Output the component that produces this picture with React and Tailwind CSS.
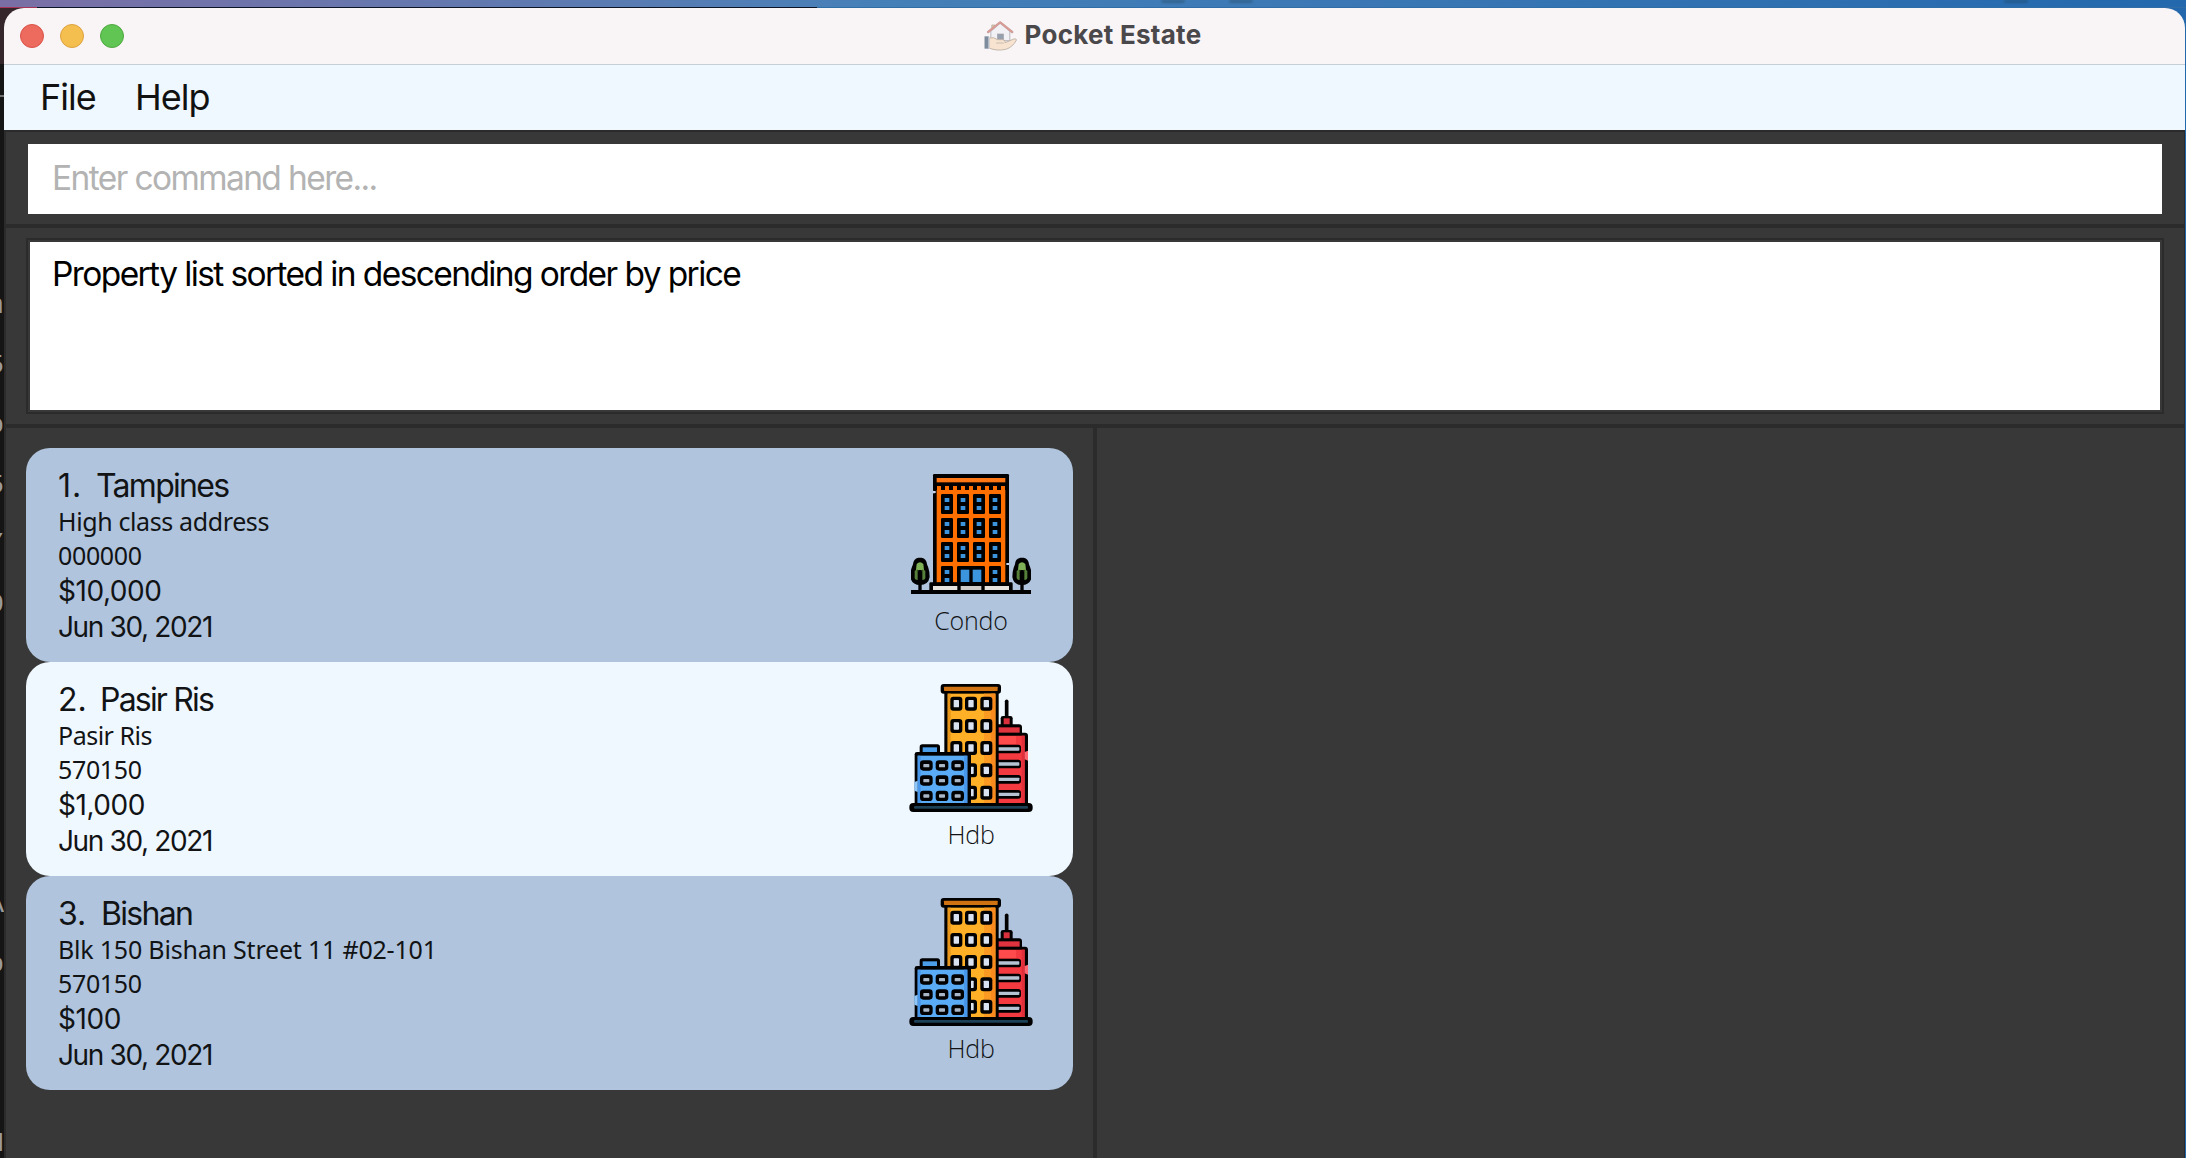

import React from "react";

const properties = [
  {
    num: "1.",
    numClass: "w-[38px] tracking-[1px]",
    name: "Tampines",
    nameClass: "tracking-[-1.72px]",
    address: "High class address",
    addressClass: "tracking-[-0.38px]",
    postal: "000000",
    price: "$10,000",
    date: "Jun 30, 2021",
    kind: "Condo",
    bg: "bg-[#b0c4de]",
  },
  {
    num: "2.",
    numClass: "w-[42px]",
    name: "Pasir Ris",
    nameClass: "tracking-[-1.8px]",
    address: "Pasir Ris",
    addressClass: "tracking-[-0.5px]",
    postal: "570150",
    price: "$1,000",
    date: "Jun 30, 2021",
    kind: "Hdb",
    bg: "bg-[#f0f8ff]",
  },
  {
    num: "3.",
    numClass: "w-[43px]",
    name: "Bishan",
    nameClass: "tracking-[-1.7px]",
    address: "Blk 150 Bishan Street 11 #02-101",
    addressClass: "tracking-[-0.2px]",
    postal: "570150",
    price: "$100",
    date: "Jun 30, 2021",
    kind: "Hdb",
    bg: "bg-[#b0c4de]",
  },
];

const editorTail = ["n", "5", "o", "5", "/", "0", "", "", "", "", "A", "o", "", "", "H"];

function Tree({ x }) {
  return (
    <g transform={`translate(${x} 0)`}>
      <path d="M-5 323h10q15 3 16 20l4 10q4 12 4 28q-4 24-29 24t-29-24q0-16 4-28l4-10q1-17 16-20z" fill="#000" />
      <path d="M-10 342q10-10 20 0l2 18h-24z" fill="#7fb257" />
      <path d="M-16 362l9-4v32q-11 0-9-12zM16 362l-9-4v32q11 0 9-12z" fill="#56803a" />
      <path d="M0 350v14" stroke="#7fb257" strokeWidth="10" />
      <path d="M0 360v62" stroke="#000" strokeWidth="10" />
    </g>
  );
}

function CondoIcon() {
  const cols = [153, 201, 249, 297];
  return (
    <svg viewBox="63 72 360 360" className="size-[120px]">
      <rect x="129" y="72" width="228" height="52" rx="4" fill="#000" />
      <rect x="129" y="130" width="228" height="272" fill="#000" />
      <rect x="134" y="120" width="223" height="20" fill="#000" />
      <rect x="140" y="84" width="206" height="13" fill="#ff7714" />
      <rect x="140" y="120" width="206" height="278" fill="#ff6f00" />
      {[141, 165, 189, 213, 237, 261, 285, 309, 333].map((x) => (
        <rect key={x} x={x} y="108" width="12" height="14" fill="#ff6f00" />
      ))}
      {[132, 204, 276].map((y) =>
        cols.map((x) => (
          <g key={`${x}-${y}`}>
            <rect x={x} y={y} width="36" height="60" rx="4" fill="#000" />
            <rect x={x + 11} y={y + 12} width="14" height="12" fill="#3c94dc" />
            <rect x={x + 11} y={y + 36} width="14" height="12" fill="#3c94dc" />
          </g>
        ))
      )}
      {[153, 297].map((x) => (
        <g key={x}>
          <rect x={x} y="348" width="36" height="52" rx="4" fill="#000" />
          <rect x={x + 11} y="360" width="14" height="12" fill="#3c94dc" />
          <rect x={x + 11} y="384" width="14" height="12" fill="#3c94dc" />
        </g>
      ))}
      <rect x="201" y="348" width="84" height="52" rx="4" fill="#000" />
      <rect x="212" y="359" width="26" height="37" fill="#3c94dc" />
      <rect x="248" y="359" width="26" height="37" fill="#3c94dc" />
      <rect x="118" y="397" width="250" height="30" rx="4" fill="#000" />
      <rect x="129" y="408" width="73" height="12" fill="#e6e2de" />
      <rect x="212" y="408" width="62" height="12" fill="#cfcbc9" />
      <rect x="284" y="408" width="73" height="12" fill="#e6e2de" />
      <rect x="63" y="420" width="361" height="12" fill="#000" />
      <path d="M129 126h8M349 342h8" stroke="#c9d8ee" strokeWidth="6" />
      <Tree x={90} />
      <Tree x={396} />
    </svg>
  );
}

function HdbIcon() {
  return (
    <svg viewBox="51 72 384 384" className="size-[128px]">
      <path d="M350 124v52" stroke="#000" strokeWidth="11" strokeLinecap="round" />
      <rect x="332" y="168" width="36" height="32" rx="7" fill="#000" />
      <rect x="341" y="175" width="18" height="20" fill="#d9303b" />
      <path d="M318 193h69q9 0 9 9v16h9q9 0 9 9v210h-96z" fill="#000" />
      <path d="M324 202h65v16h-65z" fill="#df3340" />
      <path d="M324 227h80v203h-80z" fill="#f33a40" />
      <path d="M324 228h54v24h-54z" fill="#ff4b4c" />
      <path d="M395 227h9v203h-9z" fill="#e02f3b" />
      <path d="M404 276l10-4v30l-10-4z" fill="#ff6670" />
      {[267, 312, 358, 403].map((y) => (
        <g key={y}>
          <rect x="312" y={y - 13} width="81" height="26" rx="8" fill="#000" />
          <rect x="322" y={y - 5} width="66" height="10" rx="2" fill="#b6c3d3" />
        </g>
      ))}
      <rect x="163" y="90" width="163" height="345" fill="#000" />
      <rect x="152" y="72" width="181" height="29" rx="9" fill="#000" />
      <rect x="162" y="80" width="161" height="13" rx="2" fill="#cf7212" />
      <rect x="173" y="101" width="143" height="329" fill="#ffb026" />
      <rect x="173" y="101" width="9" height="329" fill="#e8961c" />
      <rect x="282" y="101" width="34" height="329" fill="#fb9a22" />
      <rect x="303" y="101" width="13" height="329" fill="#f98a1e" />
      {[131, 198, 264, 331, 398].map((y) =>
        [199, 243, 289].map((x) => (
          <g key={`${x}-${y}`}>
            <rect x={x - 18} y={y - 21} width="36" height="42" rx="9" fill="#000" />
            <rect x={x - 8} y={y - 11} width="16" height="22" rx="2" fill="#d9e2f0" />
          </g>
        ))
      )}
      <rect x="89" y="253" width="61" height="34" rx="8" fill="#000" />
      <rect x="98" y="262" width="43" height="16" fill="#4a9de9" />
      <rect x="74" y="276" width="169" height="158" rx="7" fill="#000" />
      <rect x="83" y="287" width="149" height="143" fill="#5aabf6" />
      <path d="M83 287h9v143h-9zM222 287h10v143h-10z" fill="#4796ea" />
      <path d="M73 366l10-4v34l-10-4z" fill="#8cc6fb" />
      {[317, 362, 408].map((y) =>
        [109, 156, 203].map((x) => (
          <g key={`${x}-${y}`}>
            <rect x={x - 19} y={y - 16} width="38" height="31" rx="10" fill="#000" />
            <rect x={x - 9} y={y - 5} width="18" height="10" rx="2" fill="#a9b6c6" />
          </g>
        ))
      )}
      <rect x="58" y="429" width="370" height="27" rx="12" fill="#000" />
      <rect x="72" y="438" width="342" height="8" rx="3" fill="#1d4257" />
    </svg>
  );
}

function AppIcon() {
  return (
    <svg viewBox="71 57 98 90" className="h-[30px] w-[33px] shrink-0 opacity-80" fill="none">
      <path d="M94 82V69h9v7" fill="#e8c58c" stroke="#a59a90" strokeWidth="2.5" />
      <path d="M91 88l28-25 29 25v28H91z" fill="#f0f0f4" stroke="#a9a7b0" strokeWidth="3" />
      <path d="M83 90l36-29 36 29" stroke="#b98884" strokeWidth="7" strokeLinejoin="round" strokeLinecap="round" />
      <path d="M84 89l35-28 35 28" stroke="#d9857f" strokeWidth="4" strokeLinejoin="round" strokeLinecap="round" />
      <rect x="111" y="96" width="18" height="23" fill="#7e8a9b" stroke="#8e8d95" strokeWidth="2" />
      <path d="M86 108q14-4 25 5h16q9 1 7 9l26-11q7-2 8 3-12 22-32 28-28 6-50-4z" fill="#f7dfc6" stroke="#b5a697" strokeWidth="3" strokeLinejoin="round" />
      <path d="M107 123h23" stroke="#b5a697" strokeWidth="2.5" />
      <path d="M72 103h13v37H72z" fill="#607389" />
      <path d="M84 104h3v35h-3z" fill="#c9d3df" />
    </svg>
  );
}

function TitleBar() {
  return (
    <header className="grid h-[57px] shrink-0 grid-cols-[1fr_auto_1fr] items-center rounded-t-[20px] border-b border-[#c6ced8] bg-[#f9f5f6]">
      <div className="flex gap-4 pl-4">
        <span className="size-6 rounded-full border border-[#d9534a] bg-[#ed6a5e]" />
        <span className="size-6 rounded-full border border-[#dda23f] bg-[#f5bf4f]" />
        <span className="size-6 rounded-full border border-[#4fa83f] bg-[#61c554]" />
      </div>
      <div className="mr-1 flex items-center gap-2">
        <AppIcon />
        <h1 className="pb-0.5 text-[26px] leading-8 font-bold tracking-[0.26px] text-[#4a484a]">Pocket Estate</h1>
      </div>
    </header>
  );
}

function PropertyCard({ item }) {
  return (
    <li className={`flex h-[214px] justify-between rounded-[24px] pl-8 ${item.bg}`}>
      <div className="pt-[18px] text-[#111315]">
        <h2 className="flex text-[32px] leading-[40px]">
          <span className={item.numClass}>{item.num}</span>
          <span className={item.nameClass}>{item.name}</span>
        </h2>
        <p className={`-mt-px font-['Noto_Sans',sans-serif] text-[25px] leading-[33px] ${item.addressClass}`}>{item.address}</p>
        <p className="font-['Noto_Sans',sans-serif] text-[25px] leading-[34px] tracking-[-0.35px]">{item.postal}</p>
        <p className="pt-px text-[28px] leading-[37px] tracking-[-0.45px]">{item.price}</p>
        <p className="-mt-px text-[28px] leading-[36px] tracking-[-1.36px]">{item.date}</p>
      </div>
      <div className="mr-[38px] flex w-32 flex-col items-center pt-[22px]">
        <div className="flex size-32 items-center justify-center">
          {item.kind === "Condo" ? <CondoIcon /> : <HdbIcon />}
        </div>
        <span className="mt-[5px] font-['Open_Sans',sans-serif] text-[25px] leading-[34px] font-light tracking-[-0.2px] text-[#111315]">
          {item.kind}
        </span>
      </div>
    </li>
  );
}

function Backdrop() {
  return (
    <div className="flex h-2 shrink-0 flex-col">
      <div className="relative h-[7px] bg-linear-to-r from-[#7a6fa5] via-[#4680b8] via-40% to-[#2368ad]">
        <span className="absolute top-0 left-[1161px] h-[3px] w-6 rounded-b-full bg-[#32648f] blur-[1px]" />
        <span className="absolute top-0 left-[1229px] h-[3px] w-6 rounded-b-full bg-[#32648f] blur-[1px]" />
        <span className="absolute top-0 left-[2004px] h-[3px] w-6 rounded-b-full bg-[#245a8c] blur-[1px]" />
      </div>
      <div className="flex h-px">
        <span className="w-[37px] bg-[#a3365a]" />
        <span className="w-[780px] bg-[#0b1526]" />
        <span className="flex-1 bg-[#2f6da6]" />
      </div>
    </div>
  );
}

export default function App() {
  return (
    <div className="flex h-[1158px] w-[2186px] flex-col overflow-hidden bg-[#2368ad] font-['Inter',sans-serif]">
      <Backdrop />
      <div className="flex min-h-0 flex-1 bg-[linear-gradient(90deg,#35262c_50%,#2368ad_50%)]">
        <aside className="flex w-1 shrink-0 flex-col overflow-hidden bg-[#151515]">
          <div className="h-14 shrink-0 bg-[#35262c]" />
          <div className="mt-[31px] h-0.5 shrink-0 bg-[#707070]" />
          <div className="mt-[179px] shrink-0 font-['Liberation_Mono',monospace] text-[28px] text-[#9a9a9a]">
            {editorTail.map((ch, i) => (
              <div key={i} className="flex h-[59.9px] items-center justify-end">{ch}</div>
            ))}
          </div>
        </aside>
        <main className="flex w-[2181px] flex-col">
          <TitleBar />
          <nav className="flex h-[65px] shrink-0 bg-[#f0f8ff] pt-[14px] pl-9 text-[36px] leading-9 tracking-[-1px] text-[#111111]">
            <span className="w-[95px]">File</span>
            <span>Help</span>
          </nav>
          <div className="flex min-h-0 flex-1 flex-col border-t-2 border-r border-l-2 border-[#2b2b2b] bg-[#383838]">
            <section className="shrink-0 border-b-4 border-[#2b2b2b] pt-3 pr-[22px] pb-[10px] pl-[22px]">
              <div className="h-[70px] bg-white pt-[14px] pl-[24px] text-[33.5px] leading-10 tracking-[-1.61px] text-[#b3b3b3]">
                Enter command here...
              </div>
            </section>
            <section className="shrink-0 border-b-4 border-[#2b2b2b] px-5 py-[10px]">
              <div className="h-[176px] border-2 border-[#2b2b2b] p-0.5">
                <div className="h-full bg-white pt-[12px] pl-[22px] text-[33.5px] leading-10 tracking-[-1.6px] text-black">
                  Property list sorted in descending order by price
                </div>
              </div>
            </section>
            <section className="flex min-h-0 flex-1">
              <ul className="w-[1091px] shrink-0 border-r-4 border-[#2b2b2b] pt-5 pr-5 pl-5">
                {properties.map((item) => (
                  <PropertyCard key={item.num} item={item} />
                ))}
              </ul>
              <div className="flex-1" />
            </section>
          </div>
        </main>
      </div>
    </div>
  );
}
